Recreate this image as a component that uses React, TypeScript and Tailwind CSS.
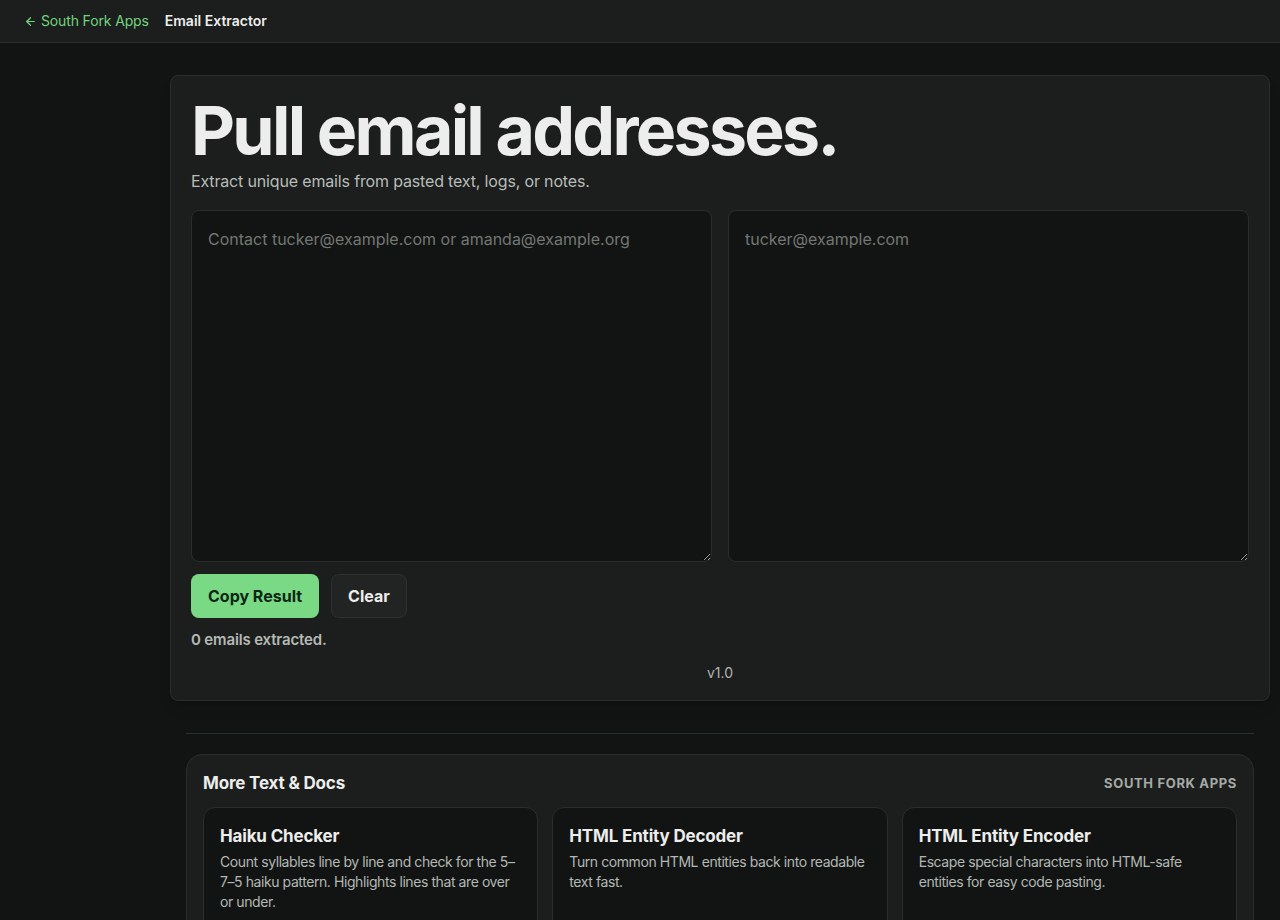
import { ArrowLeft } from 'lucide-react';

const related = [
  {
    name: 'Haiku Checker',
    desc: 'Count syllables line by line and check for the 5–7–5 haiku pattern. Highlights lines that are over or under.',
  },
  {
    name: 'HTML Entity Decoder',
    desc: 'Turn common HTML entities back into readable text fast.',
  },
  {
    name: 'HTML Entity Encoder',
    desc: 'Escape special characters into HTML-safe entities for easy code pasting.',
  },
];

function Header() {
  return (
    <header className="h-[43px] bg-[#1b1e1c] border-b border-[#2a2e2b] flex items-center gap-4 px-6">
      <a href="#" className="flex items-center gap-1 text-sm text-[#72d47e] tracking-[-0.01em]">
        <ArrowLeft size={13} strokeWidth={2.25} />
        South Fork Apps
      </a>
      <span className="text-sm font-semibold text-[#ecedec]">Email Extractor</span>
    </header>
  );
}

function Extractor() {
  return (
    <section className="bg-[#1b1e1c] border border-[#2a2e2b] rounded-lg px-5 pt-5 pb-[17px] shadow-lg">
      <h1 className="text-[68px] leading-[68px] font-bold tracking-[-0.04em] text-[#ecedec]">
        Pull email addresses.
      </h1>
      <p className="text-base leading-6 text-[#b8bcb9] mt-[5px] tracking-[-0.01em]">
        Extract unique emails from pasted text, logs, or notes.
      </p>
      <div className="grid grid-cols-2 gap-4 mt-[17px]">
        <textarea
          className="h-[352px] bg-[#121413] border border-[#2a2e2b] rounded-lg p-4 text-base text-[#ecedec] placeholder:text-[#737774] outline-none resize-y font-['Inter',sans-serif]"
          placeholder="Contact tucker@example.com or amanda@example.org"
        />
        <textarea
          readOnly
          className="h-[352px] bg-[#121413] border border-[#2a2e2b] rounded-lg p-4 text-base text-[#ecedec] placeholder:text-[#737774] outline-none resize-y font-['Inter',sans-serif]"
          placeholder="tucker@example.com"
        />
      </div>
      <div className="flex gap-3 mt-3">
        <button className="h-11 px-[17px] rounded-lg bg-[#79d985] text-[#0f2614] font-bold text-base">
          Copy Result
        </button>
        <button className="h-11 px-4 rounded-lg bg-[#212422] border border-[#2d302e] text-[#ecedec] font-bold text-base">
          Clear
        </button>
      </div>
      <p className="text-[15px] font-semibold text-[#b5b9b6] mt-[11px] tracking-[-0.01em]">0 emails extracted.</p>
      <p className="text-center text-sm text-[#b0b4b1] mt-[11px]">v1.0</p>
    </section>
  );
}

function MoreTools() {
  return (
    <div className="px-4">
      <div className="border-t border-[#26302c] mt-8 pt-5">
        <section className="bg-[#1b1e1c] border border-[#2a2e2b] rounded-2xl p-4">
          <div className="flex items-center justify-between mb-[11px]">
            <h2 className="text-[17px] font-bold text-[#ecedec] tracking-[-0.01em]">More Text &amp; Docs</h2>
            <span className="text-[13px] font-bold uppercase tracking-wider text-[#a5aaa6]">
              South Fork Apps
            </span>
          </div>
          <div className="grid grid-cols-3 gap-[14px]">
            {related.map((r) => (
              <a
                key={r.name}
                href="#"
                className="block bg-[#121413] border border-[#2a2e2b] rounded-xl px-4 pt-4 pb-8"
              >
                <h3 className="text-[17px] font-bold text-[#ecedec] leading-6 tracking-[-0.01em]">{r.name}</h3>
                <p className="text-sm leading-5 text-[#b3b8b4] mt-1 tracking-[-0.03em]">{r.desc}</p>
              </a>
            ))}
          </div>
        </section>
      </div>
    </div>
  );
}

export default function App() {
  return (
    <div className="min-h-screen bg-[#121413] font-['Inter',sans-serif]">
      <Header />
      <main className="ml-[170px] w-[1100px] pt-8 pb-10">
        <Extractor />
        <MoreTools />
      </main>
    </div>
  );
}
